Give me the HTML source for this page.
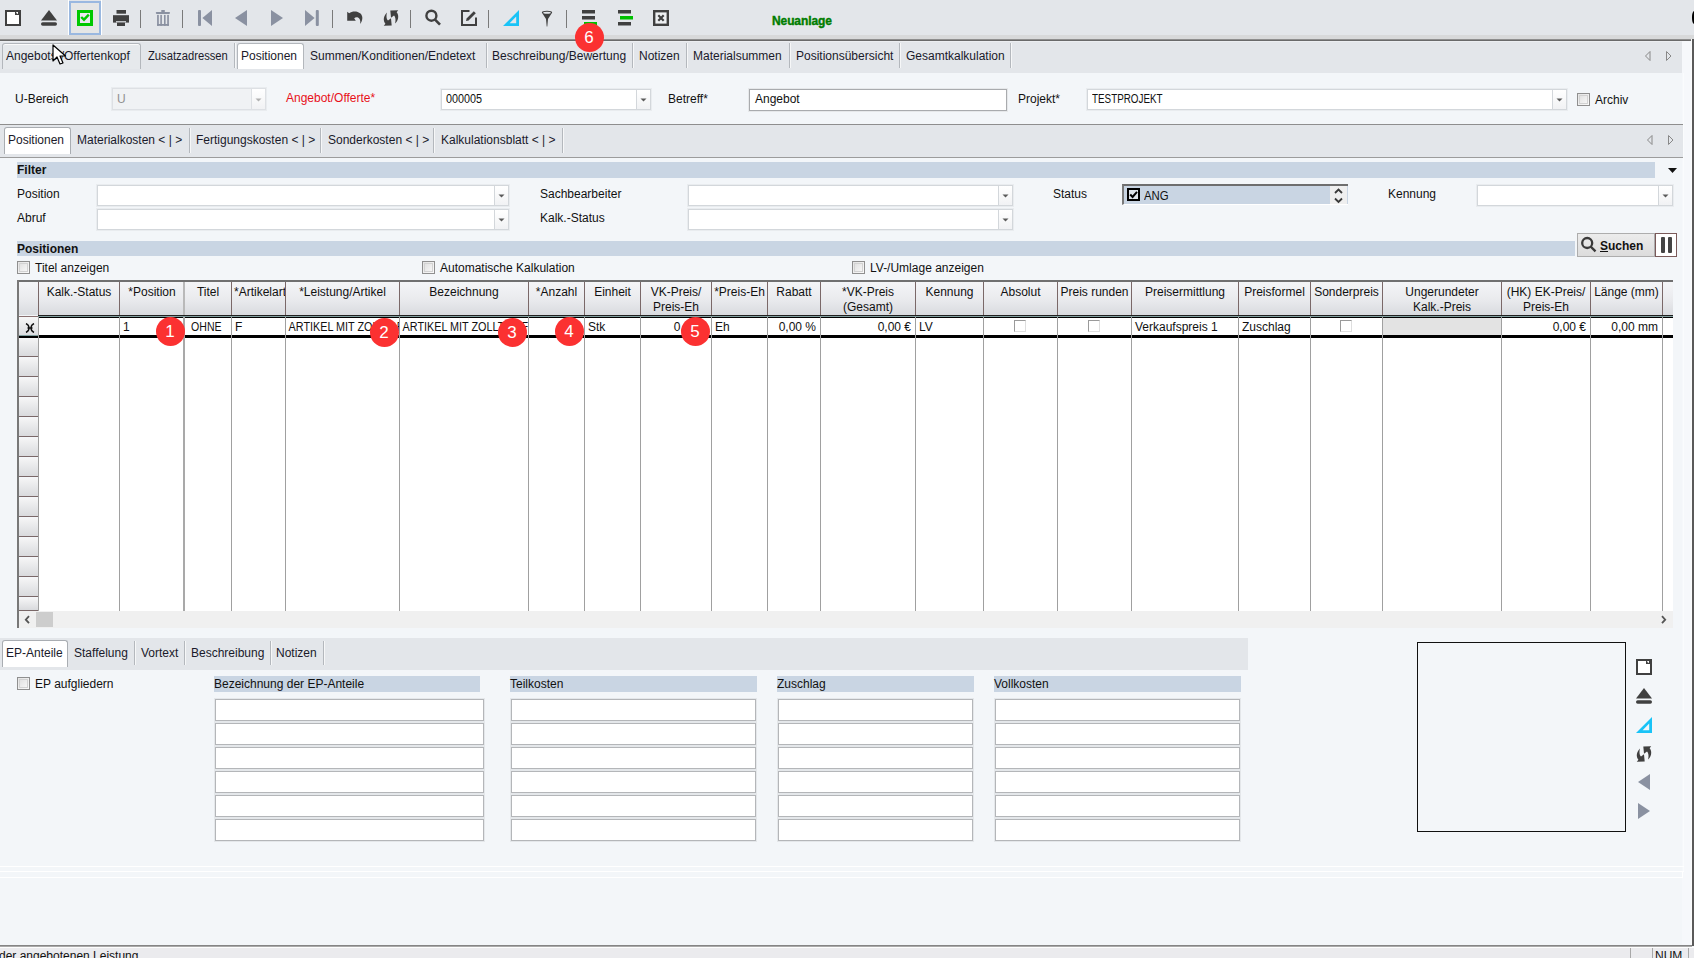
<!DOCTYPE html><html><head><meta charset="utf-8"><style>
html,body{margin:0;padding:0}
body{width:1694px;height:958px;position:relative;overflow:hidden;background:#f3f6f9;font-family:"Liberation Sans",sans-serif;font-size:12px;color:#111}
body>div{position:absolute}
.t{position:absolute;white-space:nowrap;line-height:14px;font-size:12px}
.bdg{position:absolute;width:29px;height:29px;border-radius:50%;background:#fb3131;color:#fff;font-size:17px;line-height:29px;text-align:center}
</style></head><body>
<div style="left:0px;top:0px;width:1694px;height:35px;background:#e3e6ea"></div>
<div style="left:0px;top:35px;width:1694px;height:4px;background:#d8d9da"></div>
<div style="left:0px;top:39px;width:1691px;height:1px;background:#8e8e8e"></div>
<div style="left:0px;top:40px;width:1691px;height:1px;background:#6a6a6a"></div>
<svg style="position:absolute;left:5px;top:10px;" width="16" height="16" viewBox="0 0 16 16"><rect x="1" y="1" width="14" height="14" fill="#fff" stroke="#404040" stroke-width="2"/><rect x="10" y="0" width="6" height="5" fill="#404040"/><path d="M11 2 L13 2 L13 4 Q11.5 4 11 2Z" fill="#fff"/></svg>
<svg style="position:absolute;left:41px;top:10px;" width="16" height="16" viewBox="0 0 16 16"><path d="M8 0 L16 10.5 L0 10.5Z" fill="#404040"/><rect x="0" y="12.3" width="16" height="3.5" rx="1.7" fill="#404040"/></svg>
<div style="left:68px;top:0px;width:34px;height:35px;border:1px solid #fff;border-top:none;box-sizing:border-box"></div>
<div style="left:69px;top:1px;width:32px;height:34px;border:2px solid #9ab8e0;box-sizing:border-box;background:#e5e6e6"></div>
<svg style="position:absolute;left:77px;top:10px;" width="16" height="16" viewBox="0 0 16 16"><rect x="1.5" y="1.5" width="13" height="13" fill="#ece8f2" stroke="#00c800" stroke-width="3"/><path d="M4.2 7 L7 9.7 L11.8 4.7" fill="none" stroke="#00c800" stroke-width="2.4"/></svg>
<svg style="position:absolute;left:113px;top:10px;" width="16" height="16" viewBox="0 0 16 16"><rect x="3.5" y="0" width="9.5" height="3.7" fill="#404040"/><rect x="0" y="5.2" width="16" height="7.4" fill="#404040"/><rect x="4" y="12" width="8" height="4" fill="#404040"/><rect x="3" y="11.2" width="10" height="1.2" fill="#e3e6ea"/></svg>
<div style="left:140px;top:10px;width:1px;height:18px;background:#7a7a7a"></div>
<div style="left:182px;top:10px;width:1px;height:18px;background:#7a7a7a"></div>
<div style="left:332px;top:10px;width:1px;height:18px;background:#7a7a7a"></div>
<div style="left:410px;top:10px;width:1px;height:18px;background:#7a7a7a"></div>
<div style="left:488px;top:10px;width:1px;height:18px;background:#7a7a7a"></div>
<div style="left:566px;top:10px;width:1px;height:18px;background:#7a7a7a"></div>
<svg style="position:absolute;left:155px;top:10px;" width="16" height="16" viewBox="0 0 16 16"><rect x="6.3" y="0" width="3.5" height="2.5" fill="#8a91a1"/><rect x="0.8" y="1.9" width="14.2" height="2" rx="0.8" fill="#8a91a1"/><rect x="2.1" y="4.9" width="1.7" height="10.9" fill="#8a91a1"/><rect x="5.3" y="4.9" width="1.6" height="10.9" fill="#8a91a1"/><rect x="9" y="4.9" width="1.6" height="10.9" fill="#8a91a1"/><rect x="12.2" y="4.9" width="1.7" height="10.9" fill="#8a91a1"/><rect x="2.1" y="14" width="11.8" height="1.8" fill="#8a91a1"/></svg>
<svg style="position:absolute;left:198px;top:10px;" width="16" height="16" viewBox="0 0 16 16"><rect x="0" y="0" width="3" height="16" rx="1" fill="#8a91a1"/><path d="M4.4 8 L14 0 L14 16Z" fill="#8a91a1"/></svg>
<svg style="position:absolute;left:235px;top:10px;" width="13" height="16" viewBox="0 0 13 16"><path d="M0 8 L12 0 L12 16Z" fill="#8a91a1"/></svg>
<svg style="position:absolute;left:271px;top:10px;" width="13" height="16" viewBox="0 0 13 16"><path d="M0 0 L12 8 L0 16Z" fill="#8a91a1"/></svg>
<svg style="position:absolute;left:305px;top:10px;" width="16" height="16" viewBox="0 0 16 16"><path d="M0 0 L9.6 8 L0 16Z" fill="#8a91a1"/><rect x="10.8" y="0" width="3" height="16" rx="1" fill="#8a91a1"/></svg>
<svg style="position:absolute;left:347px;top:10px;" width="16" height="16" viewBox="0 0 16 16"><path d="M0.2 1.7 L2.2 3.2 C5 1 10 0.5 13.5 3.5 C16.5 6.5 15.5 11 13 14 C13.8 11 13 8.5 11 7.5 C9.5 7 8 7.5 7.2 8.2 L8.8 10.7 L0.2 10.7 Z" fill="#404040"/></svg>
<svg style="position:absolute;left:383px;top:10px;" width="16" height="16" viewBox="0 0 16 16"><path d="M7.3 0.5 L15.2 0.3 L13.6 2.3 C15.8 4.5 16.2 9.5 12 13.5 C13 10 12.5 7 11 5.5 L8 7.8 Z" fill="#404040"/><path d="M8.7 15.5 L0.8 15.7 L2.4 13.7 C0.2 11.5 -0.2 6.5 4 2.5 C3 6 3.5 9 5 10.5 L8 8.2 Z" fill="#404040"/></svg>
<svg style="position:absolute;left:424px;top:9px;" width="18" height="18" viewBox="0 0 18 18"><circle cx="7.4" cy="6.7" r="5" fill="none" stroke="#404040" stroke-width="2.4"/><path d="M10.8 10.3 L16 15.6" stroke="#404040" stroke-width="2.6"/></svg>
<svg style="position:absolute;left:461px;top:10px;" width="17" height="16" viewBox="0 0 17 16"><path d="M8.5 1 H1 V15 H15 V7.5" fill="none" stroke="#404040" stroke-width="2"/><path d="M5 11 L5.6 8.4 L12.8 1.2 L14.8 3.2 L7.6 10.4Z" fill="#404040"/></svg>
<svg style="position:absolute;left:503px;top:10px;" width="16" height="16" viewBox="0 0 16 16"><path d="M16 0 V16 H0Z M13.2 6.6 L6.6 13.2 H13.2Z" fill="#19c3f7" fill-rule="evenodd"/></svg>
<svg style="position:absolute;left:541px;top:10px;" width="12" height="17" viewBox="0 0 12 17"><path d="M6 0.8 C9.5 0.8 11.2 1.6 11.2 2.6 L7 9 L6.3 16.5 L5.7 16.5 L5 9 L0.8 2.6 C0.8 1.6 2.5 0.8 6 0.8Z" fill="#404040"/><ellipse cx="6" cy="2.7" rx="3.8" ry="1" fill="#e3e6ea"/></svg>
<svg style="position:absolute;left:582px;top:10px;" width="16" height="16" viewBox="0 0 16 16"><rect x="0" y="0" width="13" height="3.5" fill="#404040"/><rect x="0" y="6" width="13" height="3.5" fill="#404040"/><rect x="2" y="12" width="13" height="3.5" fill="#00c000"/></svg>
<svg style="position:absolute;left:617px;top:10px;" width="17" height="16" viewBox="0 0 17 16"><rect x="1" y="0" width="13" height="3.5" fill="#404040"/><rect x="3" y="6" width="13" height="3.5" fill="#00c000"/><rect x="1" y="12" width="13" height="3.5" fill="#404040"/></svg>
<svg style="position:absolute;left:653px;top:10px;" width="16" height="16" viewBox="0 0 16 16"><rect x="1.2" y="1.2" width="13.6" height="13.6" fill="#eef0f2" stroke="#404040" stroke-width="2.4"/><path d="M5.3 5.3 L10.7 10.7 M10.7 5.3 L5.3 10.7" stroke="#404040" stroke-width="2.2"/></svg>
<div class="t" style="left:772px;top:14px;font-weight:bold;color:#007d00;font-size:12px;-webkit-text-stroke:0.4px #007d00;letter-spacing:-0.1px">Neuanlage</div>
<svg style="position:absolute;left:1691px;top:11px;" width="3" height="13" viewBox="0 0 3 13"><path d="M3 0 Q1 1 1 6.5 Q1 12 3 13Z" fill="#000"/></svg>
<div style="left:0px;top:41px;width:1682px;height:32px;background:#e3e6ea"></div>
<div style="left:0px;top:41px;width:1682px;height:1px;background:#eceef1"></div>
<div style="left:1682px;top:41px;width:9px;height:905px;background:#f6f8fb"></div>
<div style="left:1691px;top:39px;width:1px;height:907px;background:#fbfbfb"></div>
<div style="left:1692px;top:39px;width:2px;height:907px;background:#5a5a5a"></div>
<div style="left:2px;top:43px;width:139px;height:26px;border:1px solid #b3b7bc;border-bottom:none;border-radius:3px 3px 0 0;box-sizing:border-box;background:#e6e9ec;box-shadow:inset 0 1px 0 #fafafa"></div>
<div style="left:237px;top:43px;width:67px;height:26px;border:1px solid #b3b7bc;border-bottom:none;border-radius:3px 3px 0 0;box-sizing:border-box;background:#fff"></div>
<div style="left:234px;top:43px;width:1px;height:25px;background:#b4b8bd;box-shadow:1px 0 0 #f6f7f8"></div>
<div style="left:486px;top:43px;width:1px;height:25px;background:#b4b8bd;box-shadow:1px 0 0 #f6f7f8"></div>
<div style="left:632px;top:43px;width:1px;height:25px;background:#b4b8bd;box-shadow:1px 0 0 #f6f7f8"></div>
<div style="left:686px;top:43px;width:1px;height:25px;background:#b4b8bd;box-shadow:1px 0 0 #f6f7f8"></div>
<div style="left:789px;top:43px;width:1px;height:25px;background:#b4b8bd;box-shadow:1px 0 0 #f6f7f8"></div>
<div style="left:899px;top:43px;width:1px;height:25px;background:#b4b8bd;box-shadow:1px 0 0 #f6f7f8"></div>
<div style="left:1010px;top:43px;width:1px;height:25px;background:#b4b8bd;box-shadow:1px 0 0 #f6f7f8"></div>
<div class="t" style="left:6px;top:49px;color:#1a1a2a">Angebots-/Offertenkopf</div>
<div class="t" style="left:148px;top:49px;color:#1a1a2a;transform:scaleX(0.935);transform-origin:0 0">Zusatzadressen</div>
<div class="t" style="left:241px;top:49px;color:#1a1a2a">Positionen</div>
<div class="t" style="left:310px;top:49px;color:#1a1a2a">Summen/Konditionen/Endetext</div>
<div class="t" style="left:492px;top:49px;color:#1a1a2a">Beschreibung/Bewertung</div>
<div class="t" style="left:639px;top:49px;color:#1a1a2a">Notizen</div>
<div class="t" style="left:693px;top:49px;color:#1a1a2a">Materialsummen</div>
<div class="t" style="left:796px;top:49px;color:#1a1a2a">Positionsübersicht</div>
<div class="t" style="left:906px;top:49px;color:#1a1a2a">Gesamtkalkulation</div>
<svg style="position:absolute;left:1645px;top:51px;" width="6" height="10" viewBox="0 0 6 10"><path d="M5 0.5 L0.5 5 L5 9.5Z" fill="none" stroke="#888" stroke-width="1"/></svg>
<svg style="position:absolute;left:1666px;top:51px;" width="6" height="10" viewBox="0 0 6 10"><path d="M0.5 0.5 L5 5 L0.5 9.5Z" fill="none" stroke="#888" stroke-width="1"/></svg>
<div class="t" style="left:15px;top:92px;">U-Bereich</div>
<div style="left:112px;top:88px;width:154px;height:22px;background:#f0f2f4;border:1px solid #dde0e4;box-sizing:border-box;box-shadow:0 0 0 1px #e9ecef"></div>
<div style="left:251px;top:89px;width:14px;height:20px;border-left:1px solid #dde0e4;box-sizing:border-box;background:linear-gradient(#fff,#f1f2f4)"></div>
<svg style="position:absolute;left:255px;top:98px;" width="7" height="4" viewBox="0 0 7 4"><path d="M0.5 0.5 L6.5 0.5 L3.5 3.5Z" fill="#b0b0b0"/></svg>
<div class="t" style="left:117px;top:92px;color:#909090">U</div>
<div class="t" style="left:286px;top:91px;color:#e8101a">Angebot/Offerte*</div>
<div style="left:441px;top:89px;width:210px;height:21px;background:#fff;border:1px solid #d3d7db;box-sizing:border-box;box-shadow:0 0 0 1px #e9ecef"></div>
<div style="left:636px;top:90px;width:14px;height:19px;border-left:1px solid #d3d7db;box-sizing:border-box;background:linear-gradient(#fff,#f1f2f4)"></div>
<svg style="position:absolute;left:640px;top:98px;" width="7" height="4" viewBox="0 0 7 4"><path d="M0.5 0.5 L6.5 0.5 L3.5 3.5Z" fill="#5a5a5a"/></svg>
<div class="t" style="left:446px;top:92px;color:#111;transform:scaleX(0.9);transform-origin:0 0">000005</div>
<div class="t" style="left:668px;top:92px;">Betreff*</div>
<div style="left:749px;top:89px;width:258px;height:22px;background:#fff;border:1px solid #a9abae;box-sizing:border-box;box-shadow:0 0 0 1px #e6e8ea"></div>
<div class="t" style="left:755px;top:92px;">Angebot</div>
<div class="t" style="left:1018px;top:92px;">Projekt*</div>
<div style="left:1087px;top:89px;width:480px;height:21px;background:#fff;border:1px solid #d3d7db;box-sizing:border-box;box-shadow:0 0 0 1px #e9ecef"></div>
<div style="left:1552px;top:90px;width:14px;height:19px;border-left:1px solid #d3d7db;box-sizing:border-box;background:linear-gradient(#fff,#f1f2f4)"></div>
<svg style="position:absolute;left:1556px;top:98px;" width="7" height="4" viewBox="0 0 7 4"><path d="M0.5 0.5 L6.5 0.5 L3.5 3.5Z" fill="#5a5a5a"/></svg>
<div class="t" style="left:1092px;top:92px;color:#111;transform:scaleX(0.82);transform-origin:0 0">TESTPROJEKT</div>
<div style="left:1577px;top:93px;width:13px;height:13px;border:1px solid #8f8f8f;box-sizing:border-box;background:linear-gradient(135deg,#e4e4e4,#fafafa)"></div>
<div style="left:1579px;top:95px;width:9px;height:9px;border:1px solid #d2d2d2;box-sizing:border-box;background:linear-gradient(135deg,#e2e2e2,#f6f6f6)"></div>
<div class="t" style="left:1595px;top:93px;">Archiv</div>
<div style="left:0px;top:124px;width:1683px;height:1px;background:#8e8e8e"></div>
<div style="left:0px;top:125px;width:1683px;height:32px;background:#e3e6ea"></div>
<div style="left:0px;top:157px;width:1683px;height:1px;background:#9c9c9c"></div>
<div style="left:4px;top:127px;width:67px;height:27px;border:1px solid #a9adb2;border-bottom:none;border-radius:3px 3px 0 0;box-sizing:border-box;background:#fff"></div>
<div style="left:189px;top:128px;width:1px;height:25px;background:#b4b8bd;box-shadow:1px 0 0 #f6f7f8"></div>
<div style="left:320px;top:128px;width:1px;height:25px;background:#b4b8bd;box-shadow:1px 0 0 #f6f7f8"></div>
<div style="left:433px;top:128px;width:1px;height:25px;background:#b4b8bd;box-shadow:1px 0 0 #f6f7f8"></div>
<div style="left:562px;top:128px;width:1px;height:25px;background:#b4b8bd;box-shadow:1px 0 0 #f6f7f8"></div>
<div class="t" style="left:8px;top:133px;color:#1a1a2a">Positionen</div>
<div class="t" style="left:77px;top:133px;color:#1a1a2a">Materialkosten &lt; | &gt;</div>
<div class="t" style="left:196px;top:133px;color:#1a1a2a">Fertigungskosten &lt; | &gt;</div>
<div class="t" style="left:328px;top:133px;color:#1a1a2a">Sonderkosten &lt; | &gt;</div>
<div class="t" style="left:441px;top:133px;color:#1a1a2a">Kalkulationsblatt &lt; | &gt;</div>
<svg style="position:absolute;left:1647px;top:135px;" width="6" height="10" viewBox="0 0 6 10"><path d="M5 0.5 L0.5 5 L5 9.5Z" fill="none" stroke="#888" stroke-width="1"/></svg>
<svg style="position:absolute;left:1668px;top:135px;" width="6" height="10" viewBox="0 0 6 10"><path d="M0.5 0.5 L5 5 L0.5 9.5Z" fill="none" stroke="#888" stroke-width="1"/></svg>
<div style="left:17px;top:162px;width:1638px;height:16px;background:#c9d5e3"></div>
<div class="t" style="left:17px;top:163px;font-weight:bold">Filter</div>
<svg style="position:absolute;left:1668px;top:168px;" width="10" height="6" viewBox="0 0 10 6"><path d="M0 0 H9 L4.5 5Z" fill="#111"/></svg>
<div class="t" style="left:17px;top:187px;">Position</div>
<div style="left:97px;top:185px;width:412px;height:21px;background:#fff;border:1px solid #d3d7db;box-sizing:border-box;box-shadow:0 0 0 1px #e9ecef"></div>
<div style="left:494px;top:186px;width:14px;height:19px;border-left:1px solid #d3d7db;box-sizing:border-box;background:linear-gradient(#fff,#f1f2f4)"></div>
<svg style="position:absolute;left:498px;top:194px;" width="7" height="4" viewBox="0 0 7 4"><path d="M0.5 0.5 L6.5 0.5 L3.5 3.5Z" fill="#5a5a5a"/></svg>
<div class="t" style="left:17px;top:211px;">Abruf</div>
<div style="left:97px;top:209px;width:412px;height:21px;background:#fff;border:1px solid #d3d7db;box-sizing:border-box;box-shadow:0 0 0 1px #e9ecef"></div>
<div style="left:494px;top:210px;width:14px;height:19px;border-left:1px solid #d3d7db;box-sizing:border-box;background:linear-gradient(#fff,#f1f2f4)"></div>
<svg style="position:absolute;left:498px;top:218px;" width="7" height="4" viewBox="0 0 7 4"><path d="M0.5 0.5 L6.5 0.5 L3.5 3.5Z" fill="#5a5a5a"/></svg>
<div class="t" style="left:540px;top:187px;">Sachbearbeiter</div>
<div style="left:688px;top:185px;width:325px;height:21px;background:#fff;border:1px solid #d3d7db;box-sizing:border-box;box-shadow:0 0 0 1px #e9ecef"></div>
<div style="left:998px;top:186px;width:14px;height:19px;border-left:1px solid #d3d7db;box-sizing:border-box;background:linear-gradient(#fff,#f1f2f4)"></div>
<svg style="position:absolute;left:1002px;top:194px;" width="7" height="4" viewBox="0 0 7 4"><path d="M0.5 0.5 L6.5 0.5 L3.5 3.5Z" fill="#5a5a5a"/></svg>
<div class="t" style="left:540px;top:211px;">Kalk.-Status</div>
<div style="left:688px;top:209px;width:325px;height:21px;background:#fff;border:1px solid #d3d7db;box-sizing:border-box;box-shadow:0 0 0 1px #e9ecef"></div>
<div style="left:998px;top:210px;width:14px;height:19px;border-left:1px solid #d3d7db;box-sizing:border-box;background:linear-gradient(#fff,#f1f2f4)"></div>
<svg style="position:absolute;left:1002px;top:218px;" width="7" height="4" viewBox="0 0 7 4"><path d="M0.5 0.5 L6.5 0.5 L3.5 3.5Z" fill="#5a5a5a"/></svg>
<div class="t" style="left:1053px;top:187px;">Status</div>
<div style="left:1122px;top:184px;width:226px;height:21px;background:#c9d5e3;border-top:2px solid #6e6e6e;border-left:2px solid #7a7a7a;border-bottom:1px solid #fff;box-sizing:border-box"></div>
<div style="left:1330px;top:186px;width:17px;height:18px;background:#efefef"></div>
<svg style="position:absolute;left:1334px;top:188px;" width="10" height="16" viewBox="0 0 10 16"><path d="M1 5 L4.5 1.5 L8 5" fill="none" stroke="#3a3a3a" stroke-width="1.8"/><path d="M1 10.5 L4.5 14 L8 10.5" fill="none" stroke="#3a3a3a" stroke-width="1.8"/></svg>
<div style="left:1127px;top:188px;width:13px;height:13px;border:2px solid #000;box-sizing:border-box;background:#dde3ea"></div>
<svg style="position:absolute;left:1127px;top:188px;" width="13" height="13" viewBox="0 0 13 13"><path d="M3.2 6.5 L5.6 9 L10 3.8" fill="none" stroke="#000" stroke-width="2"/></svg>
<div class="t" style="left:1144px;top:189px;;transform:scaleX(0.95);transform-origin:0 0">ANG</div>
<div class="t" style="left:1388px;top:187px;">Kennung</div>
<div style="left:1477px;top:185px;width:196px;height:21px;background:#fff;border:1px solid #d3d7db;box-sizing:border-box;box-shadow:0 0 0 1px #e9ecef"></div>
<div style="left:1658px;top:186px;width:14px;height:19px;border-left:1px solid #d3d7db;box-sizing:border-box;background:linear-gradient(#fff,#f1f2f4)"></div>
<svg style="position:absolute;left:1662px;top:194px;" width="7" height="4" viewBox="0 0 7 4"><path d="M0.5 0.5 L6.5 0.5 L3.5 3.5Z" fill="#5a5a5a"/></svg>
<div style="left:17px;top:241px;width:1558px;height:15px;background:#c9d5e3"></div>
<div class="t" style="left:17px;top:242px;font-weight:bold">Positionen</div>
<div style="left:1577px;top:233px;width:78px;height:24px;border:1px solid #adadad;box-sizing:border-box;background:linear-gradient(#ececec,#dcdcdc)"></div>
<svg style="position:absolute;left:1580px;top:236px;" width="18" height="18" viewBox="0 0 18 18"><circle cx="7.2" cy="7" r="5" fill="none" stroke="#3a3a3a" stroke-width="2.3"/><path d="M10.6 10.5 L15.5 15.4" stroke="#3a3a3a" stroke-width="2.4"/></svg>
<div class="t" style="left:1600px;top:239px;font-weight:bold;color:#111"><u>S</u>uchen</div>
<div style="left:1655px;top:233px;width:22px;height:24px;border:1px solid #7a5a5a;box-sizing:border-box;background:#fff"></div>
<div style="left:1661px;top:237px;width:4px;height:16px;background:#444;border-radius:1px"></div>
<div style="left:1668px;top:237px;width:4px;height:16px;background:#444;border-radius:1px"></div>
<div style="left:17px;top:261px;width:13px;height:13px;border:1px solid #8f8f8f;box-sizing:border-box;background:linear-gradient(135deg,#e4e4e4,#fafafa)"></div>
<div style="left:19px;top:263px;width:9px;height:9px;border:1px solid #d2d2d2;box-sizing:border-box;background:linear-gradient(135deg,#e2e2e2,#f6f6f6)"></div>
<div class="t" style="left:35px;top:261px;">Titel anzeigen</div>
<div style="left:422px;top:261px;width:13px;height:13px;border:1px solid #8f8f8f;box-sizing:border-box;background:linear-gradient(135deg,#e4e4e4,#fafafa)"></div>
<div style="left:424px;top:263px;width:9px;height:9px;border:1px solid #d2d2d2;box-sizing:border-box;background:linear-gradient(135deg,#e2e2e2,#f6f6f6)"></div>
<div class="t" style="left:440px;top:261px;">Automatische Kalkulation</div>
<div style="left:852px;top:261px;width:13px;height:13px;border:1px solid #8f8f8f;box-sizing:border-box;background:linear-gradient(135deg,#e4e4e4,#fafafa)"></div>
<div style="left:854px;top:263px;width:9px;height:9px;border:1px solid #d2d2d2;box-sizing:border-box;background:linear-gradient(135deg,#e2e2e2,#f6f6f6)"></div>
<div class="t" style="left:870px;top:261px;">LV-/Umlage anzeigen</div>
<div style="left:17px;top:280px;width:1656px;height:2px;background:#707070"></div>
<div style="left:17px;top:280px;width:2px;height:348px;background:#787878"></div>
<div style="left:19px;top:282px;width:1654px;height:33px;background:linear-gradient(#f4f5f7,#e9eaed 55%,#d9dbdf)"></div>
<div style="left:38px;top:317px;width:1635px;height:294px;background:#fff"></div>
<div style="left:38px;top:315px;width:1635px;height:1px;background:#222"></div>
<div style="left:38px;top:316px;width:1635px;height:1px;background:#809e9e"></div>
<div style="left:38px;top:317px;width:1635px;height:1px;background:#000"></div>
<div style="left:19px;top:335px;width:1654px;height:3px;background:#000"></div>
<div style="left:38px;top:282px;width:1px;height:33px;background:#7a6868"></div>
<div style="left:38px;top:317px;width:1px;height:294px;background:#a0a0a0"></div>
<div style="left:119px;top:282px;width:1px;height:33px;background:#7a6868"></div>
<div style="left:119px;top:317px;width:1px;height:294px;background:#a0a0a0"></div>
<div style="left:183px;top:282px;width:2px;height:33px;background:#b9b9b9"></div>
<div style="left:183px;top:317px;width:2px;height:294px;background:#a9a9a9"></div>
<div style="left:231px;top:282px;width:1px;height:33px;background:#7a6868"></div>
<div style="left:231px;top:317px;width:1px;height:294px;background:#a0a0a0"></div>
<div style="left:285px;top:282px;width:1px;height:33px;background:#7a6868"></div>
<div style="left:285px;top:317px;width:1px;height:294px;background:#a0a0a0"></div>
<div style="left:399px;top:282px;width:1px;height:33px;background:#7a6868"></div>
<div style="left:399px;top:317px;width:1px;height:294px;background:#a0a0a0"></div>
<div style="left:528px;top:282px;width:1px;height:33px;background:#7a6868"></div>
<div style="left:528px;top:317px;width:1px;height:294px;background:#a0a0a0"></div>
<div style="left:584px;top:282px;width:1px;height:33px;background:#7a6868"></div>
<div style="left:584px;top:317px;width:1px;height:294px;background:#a0a0a0"></div>
<div style="left:640px;top:282px;width:1px;height:33px;background:#7a6868"></div>
<div style="left:640px;top:317px;width:1px;height:294px;background:#a0a0a0"></div>
<div style="left:711px;top:282px;width:1px;height:33px;background:#7a6868"></div>
<div style="left:711px;top:317px;width:1px;height:294px;background:#a0a0a0"></div>
<div style="left:767px;top:282px;width:1px;height:33px;background:#7a6868"></div>
<div style="left:767px;top:317px;width:1px;height:294px;background:#a0a0a0"></div>
<div style="left:820px;top:282px;width:1px;height:33px;background:#7a6868"></div>
<div style="left:820px;top:317px;width:1px;height:294px;background:#a0a0a0"></div>
<div style="left:915px;top:282px;width:1px;height:33px;background:#7a6868"></div>
<div style="left:915px;top:317px;width:1px;height:294px;background:#a0a0a0"></div>
<div style="left:983px;top:282px;width:1px;height:33px;background:#7a6868"></div>
<div style="left:983px;top:317px;width:1px;height:294px;background:#a0a0a0"></div>
<div style="left:1057px;top:282px;width:1px;height:33px;background:#7a6868"></div>
<div style="left:1057px;top:317px;width:1px;height:294px;background:#a0a0a0"></div>
<div style="left:1131px;top:282px;width:1px;height:33px;background:#7a6868"></div>
<div style="left:1131px;top:317px;width:1px;height:294px;background:#a0a0a0"></div>
<div style="left:1238px;top:282px;width:1px;height:33px;background:#7a6868"></div>
<div style="left:1238px;top:317px;width:1px;height:294px;background:#a0a0a0"></div>
<div style="left:1310px;top:282px;width:1px;height:33px;background:#7a6868"></div>
<div style="left:1310px;top:317px;width:1px;height:294px;background:#a0a0a0"></div>
<div style="left:1382px;top:282px;width:1px;height:33px;background:#7a6868"></div>
<div style="left:1382px;top:317px;width:1px;height:294px;background:#a0a0a0"></div>
<div style="left:1501px;top:282px;width:1px;height:33px;background:#7a6868"></div>
<div style="left:1501px;top:317px;width:1px;height:294px;background:#a0a0a0"></div>
<div style="left:1590px;top:282px;width:1px;height:33px;background:#7a6868"></div>
<div style="left:1590px;top:317px;width:1px;height:294px;background:#a0a0a0"></div>
<div style="left:1662px;top:282px;width:1px;height:33px;background:#7a6868"></div>
<div style="left:1662px;top:317px;width:1px;height:294px;background:#a0a0a0"></div>
<div style="left:19px;top:316px;width:19px;height:19px;background:linear-gradient(#f7f7f7,#dcdde0);border-top:1px solid #8a7070;box-sizing:border-box"></div>
<div style="left:19px;top:335px;width:19px;height:1px;background:#809e9e"></div>
<div style="left:19px;top:338px;width:19px;height:19px;background:linear-gradient(#f5f5f6,#d9dadd);border-bottom:1px solid #7a6868;box-sizing:border-box"></div>
<div style="left:19px;top:358px;width:19px;height:19px;background:linear-gradient(#f5f5f6,#d9dadd);border-bottom:1px solid #7a6868;box-sizing:border-box"></div>
<div style="left:19px;top:378px;width:19px;height:19px;background:linear-gradient(#f5f5f6,#d9dadd);border-bottom:1px solid #7a6868;box-sizing:border-box"></div>
<div style="left:19px;top:398px;width:19px;height:19px;background:linear-gradient(#f5f5f6,#d9dadd);border-bottom:1px solid #7a6868;box-sizing:border-box"></div>
<div style="left:19px;top:418px;width:19px;height:19px;background:linear-gradient(#f5f5f6,#d9dadd);border-bottom:1px solid #7a6868;box-sizing:border-box"></div>
<div style="left:19px;top:438px;width:19px;height:19px;background:linear-gradient(#f5f5f6,#d9dadd);border-bottom:1px solid #7a6868;box-sizing:border-box"></div>
<div style="left:19px;top:458px;width:19px;height:19px;background:linear-gradient(#f5f5f6,#d9dadd);border-bottom:1px solid #7a6868;box-sizing:border-box"></div>
<div style="left:19px;top:478px;width:19px;height:19px;background:linear-gradient(#f5f5f6,#d9dadd);border-bottom:1px solid #7a6868;box-sizing:border-box"></div>
<div style="left:19px;top:498px;width:19px;height:19px;background:linear-gradient(#f5f5f6,#d9dadd);border-bottom:1px solid #7a6868;box-sizing:border-box"></div>
<div style="left:19px;top:518px;width:19px;height:19px;background:linear-gradient(#f5f5f6,#d9dadd);border-bottom:1px solid #7a6868;box-sizing:border-box"></div>
<div style="left:19px;top:538px;width:19px;height:19px;background:linear-gradient(#f5f5f6,#d9dadd);border-bottom:1px solid #7a6868;box-sizing:border-box"></div>
<div style="left:19px;top:558px;width:19px;height:19px;background:linear-gradient(#f5f5f6,#d9dadd);border-bottom:1px solid #7a6868;box-sizing:border-box"></div>
<div style="left:19px;top:578px;width:19px;height:19px;background:linear-gradient(#f5f5f6,#d9dadd);border-bottom:1px solid #7a6868;box-sizing:border-box"></div>
<div style="left:19px;top:598px;width:19px;height:13px;background:linear-gradient(#f5f5f6,#d9dadd);border-bottom:1px solid #7a6868;box-sizing:border-box"></div>
<div class="t" style="left:39px;width:80px;top:285px;text-align:center;overflow:hidden;color:#111">Kalk.-Status</div>
<div class="t" style="left:120px;width:64px;top:285px;text-align:center;overflow:hidden;color:#111">*Position</div>
<div class="t" style="left:185px;width:46px;top:285px;text-align:center;overflow:hidden;color:#111">Titel</div>
<div class="t" style="left:232px;width:53px;top:285px;text-align:left;padding-left:2px;box-sizing:border-box;overflow:hidden;color:#111">*Artikelart</div>
<div class="t" style="left:286px;width:113px;top:285px;text-align:center;overflow:hidden;color:#111">*Leistung/Artikel</div>
<div class="t" style="left:400px;width:128px;top:285px;text-align:center;overflow:hidden;color:#111">Bezeichnung</div>
<div class="t" style="left:529px;width:55px;top:285px;text-align:center;overflow:hidden;color:#111">*Anzahl</div>
<div class="t" style="left:585px;width:55px;top:285px;text-align:center;overflow:hidden;color:#111">Einheit</div>
<div class="t" style="left:641px;width:70px;top:285px;text-align:center;overflow:hidden;color:#111">VK-Preis/</div>
<div class="t" style="left:641px;width:70px;top:300px;text-align:center;overflow:hidden;color:#111">Preis-Eh</div>
<div class="t" style="left:712px;width:55px;top:285px;text-align:center;overflow:hidden;color:#111">*Preis-Eh</div>
<div class="t" style="left:768px;width:52px;top:285px;text-align:center;overflow:hidden;color:#111">Rabatt</div>
<div class="t" style="left:821px;width:94px;top:285px;text-align:center;overflow:hidden;color:#111">*VK-Preis</div>
<div class="t" style="left:821px;width:94px;top:300px;text-align:center;overflow:hidden;color:#111">(Gesamt)</div>
<div class="t" style="left:916px;width:67px;top:285px;text-align:center;overflow:hidden;color:#111">Kennung</div>
<div class="t" style="left:984px;width:73px;top:285px;text-align:center;overflow:hidden;color:#111">Absolut</div>
<div class="t" style="left:1058px;width:73px;top:285px;text-align:center;overflow:hidden;color:#111">Preis runden</div>
<div class="t" style="left:1132px;width:106px;top:285px;text-align:center;overflow:hidden;color:#111">Preisermittlung</div>
<div class="t" style="left:1239px;width:71px;top:285px;text-align:center;overflow:hidden;color:#111">Preisformel</div>
<div class="t" style="left:1311px;width:71px;top:285px;text-align:center;overflow:hidden;color:#111">Sonderpreis</div>
<div class="t" style="left:1383px;width:118px;top:285px;text-align:center;overflow:hidden;color:#111">Ungerundeter</div>
<div class="t" style="left:1383px;width:118px;top:300px;text-align:center;overflow:hidden;color:#111">Kalk.-Preis</div>
<div class="t" style="left:1502px;width:88px;top:285px;text-align:center;overflow:hidden;color:#111">(HK) EK-Preis/</div>
<div class="t" style="left:1502px;width:88px;top:300px;text-align:center;overflow:hidden;color:#111">Preis-Eh</div>
<div class="t" style="left:1591px;width:71px;top:285px;text-align:center;overflow:hidden;color:#111">Länge (mm)</div>
<div class="t" style="left:119px;width:57px;padding:0 4px;top:320px;text-align:left;overflow:hidden;color:#111">1</div>
<div class="t" style="left:184px;width:47px;top:320px;overflow:hidden;color:#111"><div style="padding-left:8px;transform:scaleX(0.88);transform-origin:0 0;text-align:left;width:53px">OHNE</div></div>
<div class="t" style="left:231px;width:46px;padding:0 4px;top:320px;text-align:left;overflow:hidden;color:#111">F</div>
<div class="t" style="left:285px;width:114px;top:320px;overflow:hidden;color:#111"><div style="padding-left:4px;transform:scaleX(0.9);transform-origin:0 0;text-align:left;width:127px">ARTIKEL MIT ZOLLTARIF</div></div>
<div class="t" style="left:399px;width:129px;top:320px;overflow:hidden;color:#111"><div style="padding-left:4px;transform:scaleX(0.9);transform-origin:0 0;text-align:left;width:143px">ARTIKEL MIT ZOLLTARIF</div></div>
<div class="t" style="left:584px;width:48px;padding:0 4px;top:320px;text-align:left;overflow:hidden;color:#111">Stk</div>
<div class="t" style="left:640px;width:63px;padding:0 4px;top:320px;text-align:right;overflow:hidden;color:#111">0,00 €</div>
<div class="t" style="left:711px;width:48px;padding:0 4px;top:320px;text-align:left;overflow:hidden;color:#111">Eh</div>
<div class="t" style="left:767px;width:45px;padding:0 4px;top:320px;text-align:right;overflow:hidden;color:#111">0,00 %</div>
<div class="t" style="left:820px;width:87px;padding:0 4px;top:320px;text-align:right;overflow:hidden;color:#111">0,00 €</div>
<div class="t" style="left:915px;width:60px;padding:0 4px;top:320px;text-align:left;overflow:hidden;color:#111">LV</div>
<div class="t" style="left:1131px;width:99px;padding:0 4px;top:320px;text-align:left;overflow:hidden;color:#111">Verkaufspreis 1</div>
<div class="t" style="left:1238px;width:64px;padding:0 4px;top:320px;text-align:left;overflow:hidden;color:#111">Zuschlag</div>
<div class="t" style="left:1501px;width:81px;padding:0 4px;top:320px;text-align:right;overflow:hidden;color:#111">0,00 €</div>
<div class="t" style="left:1590px;width:64px;padding:0 4px;top:320px;text-align:right;overflow:hidden;color:#111">0,00 mm</div>
<div style="left:1383px;top:318px;width:118px;height:17px;background:#e3e3e3"></div>
<div style="left:1014px;top:320px;width:12px;height:12px;border:1px solid #9a9a9a;border-right-color:#dedede;border-bottom-color:#dedede;box-sizing:border-box;background:#fff"></div>
<div style="left:1088px;top:320px;width:12px;height:12px;border:1px solid #9a9a9a;border-right-color:#dedede;border-bottom-color:#dedede;box-sizing:border-box;background:#fff"></div>
<div style="left:1340px;top:320px;width:12px;height:12px;border:1px solid #9a9a9a;border-right-color:#dedede;border-bottom-color:#dedede;box-sizing:border-box;background:#fff"></div>
<svg style="position:absolute;left:25px;top:323px;" width="10" height="10" viewBox="0 0 10 10"><path d="M1 0.5 Q4 2 4 5 Q4 8 1 9.5 M9 0.5 Q6 2 6 5 Q6 8 9 9.5 M2.5 5 H7.5" fill="none" stroke="#111" stroke-width="1.4"/></svg>
<div style="left:19px;top:611px;width:1654px;height:17px;background:#f0f0f0"></div>
<svg style="position:absolute;left:23px;top:614px;" width="8" height="11" viewBox="0 0 8 11"><path d="M6 2.2 L2.8 5.7 L6 9.2" fill="none" stroke="#555" stroke-width="1.8"/></svg>
<div style="left:36px;top:612px;width:17px;height:15px;background:#cdcdcd"></div>
<svg style="position:absolute;left:1660px;top:614px;" width="8" height="11" viewBox="0 0 8 11"><path d="M2 2.2 L5.2 5.7 L2 9.2" fill="none" stroke="#555" stroke-width="1.8"/></svg>
<div class="bdg" style="left:155.5px;top:316.5px">1</div>
<div class="bdg" style="left:369.5px;top:317.5px">2</div>
<div class="bdg" style="left:497.5px;top:317.5px">3</div>
<div class="bdg" style="left:554.5px;top:316.5px">4</div>
<div class="bdg" style="left:680.5px;top:316.5px">5</div>
<div class="bdg" style="left:574.5px;top:22.5px">6</div>
<div style="left:0px;top:638px;width:1248px;height:32px;background:#e3e6ea"></div>
<div style="left:2px;top:640px;width:66px;height:27px;border:1px solid #a9adb2;border-bottom:none;border-radius:3px 3px 0 0;box-sizing:border-box;background:#fff"></div>
<div style="left:134px;top:641px;width:1px;height:24px;background:#b4b8bd;box-shadow:1px 0 0 #f6f7f8"></div>
<div style="left:184px;top:641px;width:1px;height:24px;background:#b4b8bd;box-shadow:1px 0 0 #f6f7f8"></div>
<div style="left:270px;top:641px;width:1px;height:24px;background:#b4b8bd;box-shadow:1px 0 0 #f6f7f8"></div>
<div style="left:323px;top:641px;width:1px;height:24px;background:#b4b8bd;box-shadow:1px 0 0 #f6f7f8"></div>
<div class="t" style="left:6px;top:646px;color:#1a1a2a">EP-Anteile</div>
<div class="t" style="left:74px;top:646px;color:#1a1a2a">Staffelung</div>
<div class="t" style="left:141px;top:646px;color:#1a1a2a">Vortext</div>
<div class="t" style="left:191px;top:646px;color:#1a1a2a">Beschreibung</div>
<div class="t" style="left:276px;top:646px;color:#1a1a2a">Notizen</div>
<div style="left:17px;top:677px;width:13px;height:13px;border:1px solid #8f8f8f;box-sizing:border-box;background:linear-gradient(135deg,#e4e4e4,#fafafa)"></div>
<div style="left:19px;top:679px;width:9px;height:9px;border:1px solid #d2d2d2;box-sizing:border-box;background:linear-gradient(135deg,#e2e2e2,#f6f6f6)"></div>
<div class="t" style="left:35px;top:677px;">EP aufgliedern</div>
<div style="left:214px;top:676px;width:266px;height:16px;background:#c9d5e3"></div>
<div class="t" style="left:214px;top:677px;">Bezeichnung der EP-Anteile</div>
<div style="left:215px;top:699px;width:269px;height:22px;background:#fff;border:1px solid #b4b6b9;box-sizing:border-box;box-shadow:0 0 0 1px #e4e7ea"></div>
<div style="left:215px;top:723px;width:269px;height:22px;background:#fff;border:1px solid #b4b6b9;box-sizing:border-box;box-shadow:0 0 0 1px #e4e7ea"></div>
<div style="left:215px;top:747px;width:269px;height:22px;background:#fff;border:1px solid #b4b6b9;box-sizing:border-box;box-shadow:0 0 0 1px #e4e7ea"></div>
<div style="left:215px;top:771px;width:269px;height:22px;background:#fff;border:1px solid #b4b6b9;box-sizing:border-box;box-shadow:0 0 0 1px #e4e7ea"></div>
<div style="left:215px;top:795px;width:269px;height:22px;background:#fff;border:1px solid #b4b6b9;box-sizing:border-box;box-shadow:0 0 0 1px #e4e7ea"></div>
<div style="left:215px;top:819px;width:269px;height:22px;background:#fff;border:1px solid #b4b6b9;box-sizing:border-box;box-shadow:0 0 0 1px #e4e7ea"></div>
<div style="left:510px;top:676px;width:247px;height:16px;background:#c9d5e3"></div>
<div class="t" style="left:510px;top:677px;">Teilkosten</div>
<div style="left:511px;top:699px;width:245px;height:22px;background:#fff;border:1px solid #b4b6b9;box-sizing:border-box;box-shadow:0 0 0 1px #e4e7ea"></div>
<div style="left:511px;top:723px;width:245px;height:22px;background:#fff;border:1px solid #b4b6b9;box-sizing:border-box;box-shadow:0 0 0 1px #e4e7ea"></div>
<div style="left:511px;top:747px;width:245px;height:22px;background:#fff;border:1px solid #b4b6b9;box-sizing:border-box;box-shadow:0 0 0 1px #e4e7ea"></div>
<div style="left:511px;top:771px;width:245px;height:22px;background:#fff;border:1px solid #b4b6b9;box-sizing:border-box;box-shadow:0 0 0 1px #e4e7ea"></div>
<div style="left:511px;top:795px;width:245px;height:22px;background:#fff;border:1px solid #b4b6b9;box-sizing:border-box;box-shadow:0 0 0 1px #e4e7ea"></div>
<div style="left:511px;top:819px;width:245px;height:22px;background:#fff;border:1px solid #b4b6b9;box-sizing:border-box;box-shadow:0 0 0 1px #e4e7ea"></div>
<div style="left:777px;top:676px;width:197px;height:16px;background:#c9d5e3"></div>
<div class="t" style="left:777px;top:677px;">Zuschlag</div>
<div style="left:778px;top:699px;width:195px;height:22px;background:#fff;border:1px solid #b4b6b9;box-sizing:border-box;box-shadow:0 0 0 1px #e4e7ea"></div>
<div style="left:778px;top:723px;width:195px;height:22px;background:#fff;border:1px solid #b4b6b9;box-sizing:border-box;box-shadow:0 0 0 1px #e4e7ea"></div>
<div style="left:778px;top:747px;width:195px;height:22px;background:#fff;border:1px solid #b4b6b9;box-sizing:border-box;box-shadow:0 0 0 1px #e4e7ea"></div>
<div style="left:778px;top:771px;width:195px;height:22px;background:#fff;border:1px solid #b4b6b9;box-sizing:border-box;box-shadow:0 0 0 1px #e4e7ea"></div>
<div style="left:778px;top:795px;width:195px;height:22px;background:#fff;border:1px solid #b4b6b9;box-sizing:border-box;box-shadow:0 0 0 1px #e4e7ea"></div>
<div style="left:778px;top:819px;width:195px;height:22px;background:#fff;border:1px solid #b4b6b9;box-sizing:border-box;box-shadow:0 0 0 1px #e4e7ea"></div>
<div style="left:994px;top:676px;width:247px;height:16px;background:#c9d5e3"></div>
<div class="t" style="left:994px;top:677px;">Vollkosten</div>
<div style="left:995px;top:699px;width:245px;height:22px;background:#fff;border:1px solid #b4b6b9;box-sizing:border-box;box-shadow:0 0 0 1px #e4e7ea"></div>
<div style="left:995px;top:723px;width:245px;height:22px;background:#fff;border:1px solid #b4b6b9;box-sizing:border-box;box-shadow:0 0 0 1px #e4e7ea"></div>
<div style="left:995px;top:747px;width:245px;height:22px;background:#fff;border:1px solid #b4b6b9;box-sizing:border-box;box-shadow:0 0 0 1px #e4e7ea"></div>
<div style="left:995px;top:771px;width:245px;height:22px;background:#fff;border:1px solid #b4b6b9;box-sizing:border-box;box-shadow:0 0 0 1px #e4e7ea"></div>
<div style="left:995px;top:795px;width:245px;height:22px;background:#fff;border:1px solid #b4b6b9;box-sizing:border-box;box-shadow:0 0 0 1px #e4e7ea"></div>
<div style="left:995px;top:819px;width:245px;height:22px;background:#fff;border:1px solid #b4b6b9;box-sizing:border-box;box-shadow:0 0 0 1px #e4e7ea"></div>
<div style="left:1417px;top:642px;width:209px;height:190px;border:1px solid #111;box-sizing:border-box"></div>
<svg style="position:absolute;left:1636px;top:659px;" width="16" height="16" viewBox="0 0 16 16"><rect x="1" y="1" width="14" height="14" fill="#fff" stroke="#404040" stroke-width="2"/><rect x="10" y="0" width="6" height="5" fill="#404040"/><path d="M11 2 L13 2 L13 4 Q11.5 4 11 2Z" fill="#fff"/></svg>
<svg style="position:absolute;left:1636px;top:688px;" width="16" height="16" viewBox="0 0 16 16"><path d="M8 0 L16 10.5 L0 10.5Z" fill="#404040"/><rect x="0" y="12.3" width="16" height="3.5" rx="1.7" fill="#404040"/></svg>
<svg style="position:absolute;left:1636px;top:717px;" width="16" height="16" viewBox="0 0 16 16"><path d="M16 0 V16 H0Z M13.2 6.6 L6.6 13.2 H13.2Z" fill="#19c3f7" fill-rule="evenodd"/></svg>
<svg style="position:absolute;left:1636px;top:746px;" width="16" height="16" viewBox="0 0 16 16"><path d="M7.3 0.5 L15.2 0.3 L13.6 2.3 C15.8 4.5 16.2 9.5 12 13.5 C13 10 12.5 7 11 5.5 L8 7.8 Z" fill="#404040"/><path d="M8.7 15.5 L0.8 15.7 L2.4 13.7 C0.2 11.5 -0.2 6.5 4 2.5 C3 6 3.5 9 5 10.5 L8 8.2 Z" fill="#404040"/></svg>
<svg style="position:absolute;left:1638px;top:774px;" width="13" height="16" viewBox="0 0 13 16"><path d="M0 8 L12 0 L12 16Z" fill="#8a91a1"/></svg>
<svg style="position:absolute;left:1638px;top:803px;" width="13" height="16" viewBox="0 0 13 16"><path d="M0 0 L12 8 L0 16Z" fill="#8a91a1"/></svg>
<div style="left:1683px;top:73px;width:1px;height:798px;background:#fafcfd"></div>
<div style="left:0px;top:866px;width:1684px;height:1px;background:#fff"></div>
<div style="left:0px;top:871px;width:1684px;height:1px;background:#fff"></div>
<div style="left:0px;top:877px;width:1682px;height:1px;background:#fff"></div>
<div style="left:1682px;top:871px;width:1px;height:7px;background:#fff"></div>
<div style="left:0px;top:945px;width:1692px;height:1px;background:#858585"></div>
<div style="left:0px;top:946px;width:1692px;height:1px;background:#a9a9a9"></div>
<div style="left:0px;top:947px;width:1694px;height:1px;background:#fdfdfd"></div>
<div style="left:0px;top:948px;width:1694px;height:10px;background:#ebebee"></div>
<div style="left:1630px;top:948px;width:1px;height:10px;background:#a8a8a8"></div>
<div style="left:1652px;top:948px;width:1px;height:10px;background:#a8a8a8"></div>
<div style="left:1688px;top:948px;width:1px;height:10px;background:#a8a8a8"></div>
<div class="t" style="left:-1px;top:949px;">der angebotenen Leistung</div>
<div class="t" style="left:1655px;top:949px;">NUM</div>
<svg style="position:absolute;left:52px;top:44px;" width="14" height="22" viewBox="0 0 14 22"><path d="M1 1 L1 17 L5 13 L8 20 L11 19 L8 12 L13.5 12Z" fill="#fff" stroke="#000" stroke-width="1.2" stroke-linejoin="round"/></svg>
</body></html>
